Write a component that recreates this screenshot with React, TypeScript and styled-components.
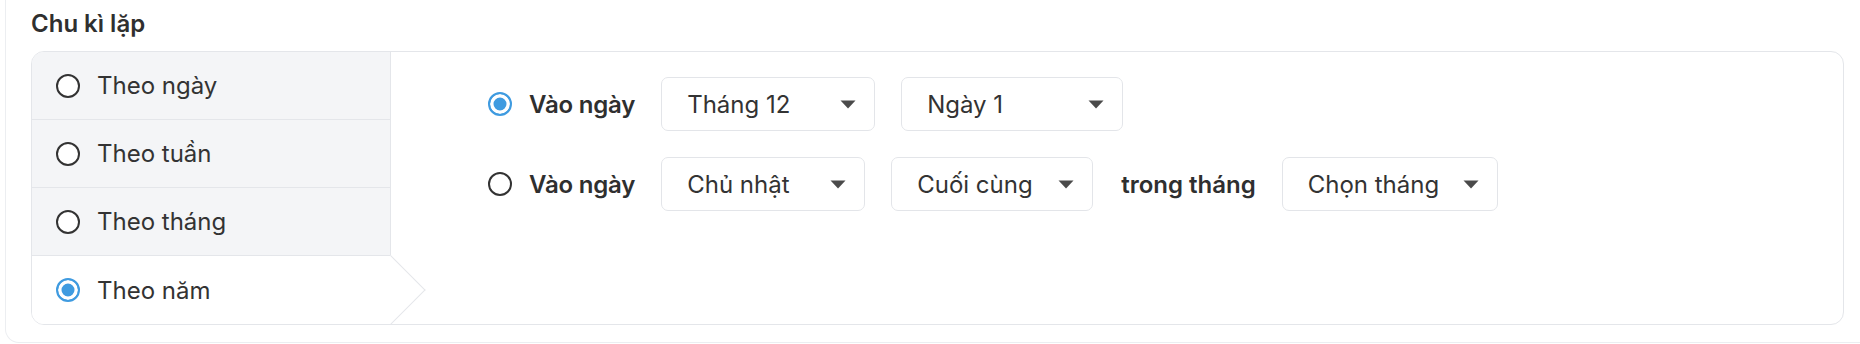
import React from "react";
import styled, { createGlobalStyle } from "styled-components";

const GlobalStyle = createGlobalStyle`
  html, body {
    margin: 0;
    padding: 0;
    background: #ffffff;
    overflow: hidden;
  }
  body {
    font-family: Inter, "Noto Sans", "Liberation Sans", sans-serif;
    color: #333333;
  }
`;

const Page = styled.div`
  padding-left: 5px;
  height: 344px;
  box-sizing: border-box;
`;

const OuterCard = styled.section`
  border-left: 1px solid #eceef1;
  border-bottom: 1px solid #eceef1;
  border-bottom-left-radius: 14px;
  padding: 9px 16px 18px 25px;
  height: 343px;
  box-sizing: border-box;
`;

const Title = styled.h3`
  margin: 0 0 13px;
  font-size: 24px;
  line-height: 29px;
  font-weight: 600;
  color: #2f2f2f;
`;

const TabsBox = styled.div`
  display: flex;
  border: 1px solid #e4e6ea;
  border-radius: 13px;
  overflow: hidden;
  height: 274px;
  box-sizing: border-box;
`;

const TabList = styled.div`
  width: 359px;
  display: flex;
  flex-direction: column;
  flex-shrink: 0;
`;

const Tab = styled.div<{ active?: boolean; last?: boolean }>`
  position: relative;
  display: flex;
  align-items: center;
  gap: 17px;
  padding-left: 24px;
  height: ${(p) => (p.last ? "68px" : "67px")};
  flex-shrink: 0;
  background: ${(p) => (p.active ? "#ffffff" : "#f4f5f7")};
  border-bottom: ${(p) => (p.last ? "none" : "1px solid #e4e6ea")};
  border-right: ${(p) => (p.active ? "none" : "1px solid #e4e6ea")};
  font-size: 24px;
  line-height: 29px;
  color: #333333;

  &::after {
    content: "";
    display: ${(p) => (p.active ? "block" : "none")};
    position: absolute;
    top: 50%;
    right: 0;
    width: 48px;
    height: 48px;
    background: #ffffff;
    border-top: 1px solid #e4e6ea;
    border-right: 1px solid #e4e6ea;
    transform: translate(50%, -50%) rotate(45deg);
    z-index: 2;
  }
`;

const Radio = styled.span<{ checked?: boolean }>`
  width: 24px;
  height: 24px;
  box-sizing: border-box;
  border-radius: 50%;
  flex-shrink: 0;
  border: ${(p) => (p.checked ? "2.5px solid #3f9be0" : "2px solid #333333")};
  background: ${(p) => (p.checked ? "#3f9be0" : "#ffffff")};
  box-shadow: ${(p) => (p.checked ? "inset 0 0 0 3.5px #ffffff" : "none")};
`;

const Panel = styled.div`
  flex: 1;
  padding: 25px 0 0 97px;
  display: flex;
  flex-direction: column;
  gap: 26px;
`;

const OptionRow = styled.div`
  display: flex;
  align-items: center;
  gap: 26px;
  height: 54px;
`;

const OptionLabel = styled.label`
  display: flex;
  align-items: center;
  gap: 17px;
  font-size: 24px;
  line-height: 29px;
  font-weight: 600;
  letter-spacing: -0.2px;
  color: #2f2f2f;
`;

const Word = styled.span`
  font-size: 24px;
  line-height: 29px;
  font-weight: 600;
  color: #2f2f2f;
  margin-left: 2px;
`;

const Select = styled.div<{ width: number }>`
  width: ${(p) => p.width}px;
  height: 54px;
  box-sizing: border-box;
  border: 1.5px solid #e3e5e9;
  border-radius: 7px;
  display: flex;
  align-items: center;
  justify-content: space-between;
  padding: 0 18px 0 25px;
  font-size: 24px;
  line-height: 29px;
  color: #333333;
  background: #ffffff;
`;

const Caret = () => (
  <svg width="16" height="9" viewBox="0 0 16 9" aria-hidden="true">
    <path d="M0.5 0.5 L15.5 0.5 L8 8.5 Z" fill="#4a4a4a" />
  </svg>
);

const tabs = ["Theo ngày", "Theo tuần", "Theo tháng", "Theo năm"];

export default function App() {
  const active = 3;
  return (
    <>
      <GlobalStyle />
      <Page>
        <OuterCard>
          <Title>Chu kì lặp</Title>
          <TabsBox>
            <TabList>
              {tabs.map((t, i) => (
                <Tab key={t} active={i === active} last={i === tabs.length - 1}>
                  <Radio checked={i === active} />
                  {t}
                </Tab>
              ))}
            </TabList>
            <Panel>
              <OptionRow>
                <OptionLabel>
                  <Radio checked />
                  Vào ngày
                </OptionLabel>
                <Select width={214}>
                  Tháng 12
                  <Caret />
                </Select>
                <Select width={222}>
                  Ngày 1
                  <Caret />
                </Select>
              </OptionRow>
              <OptionRow>
                <OptionLabel>
                  <Radio />
                  Vào ngày
                </OptionLabel>
                <Select width={204}>
                  Chủ nhật
                  <Caret />
                </Select>
                <Select width={202}>
                  Cuối cùng
                  <Caret />
                </Select>
                <Word>trong tháng</Word>
                <Select width={216}>
                  Chọn tháng
                  <Caret />
                </Select>
              </OptionRow>
            </Panel>
          </TabsBox>
        </OuterCard>
      </Page>
    </>
  );
}
